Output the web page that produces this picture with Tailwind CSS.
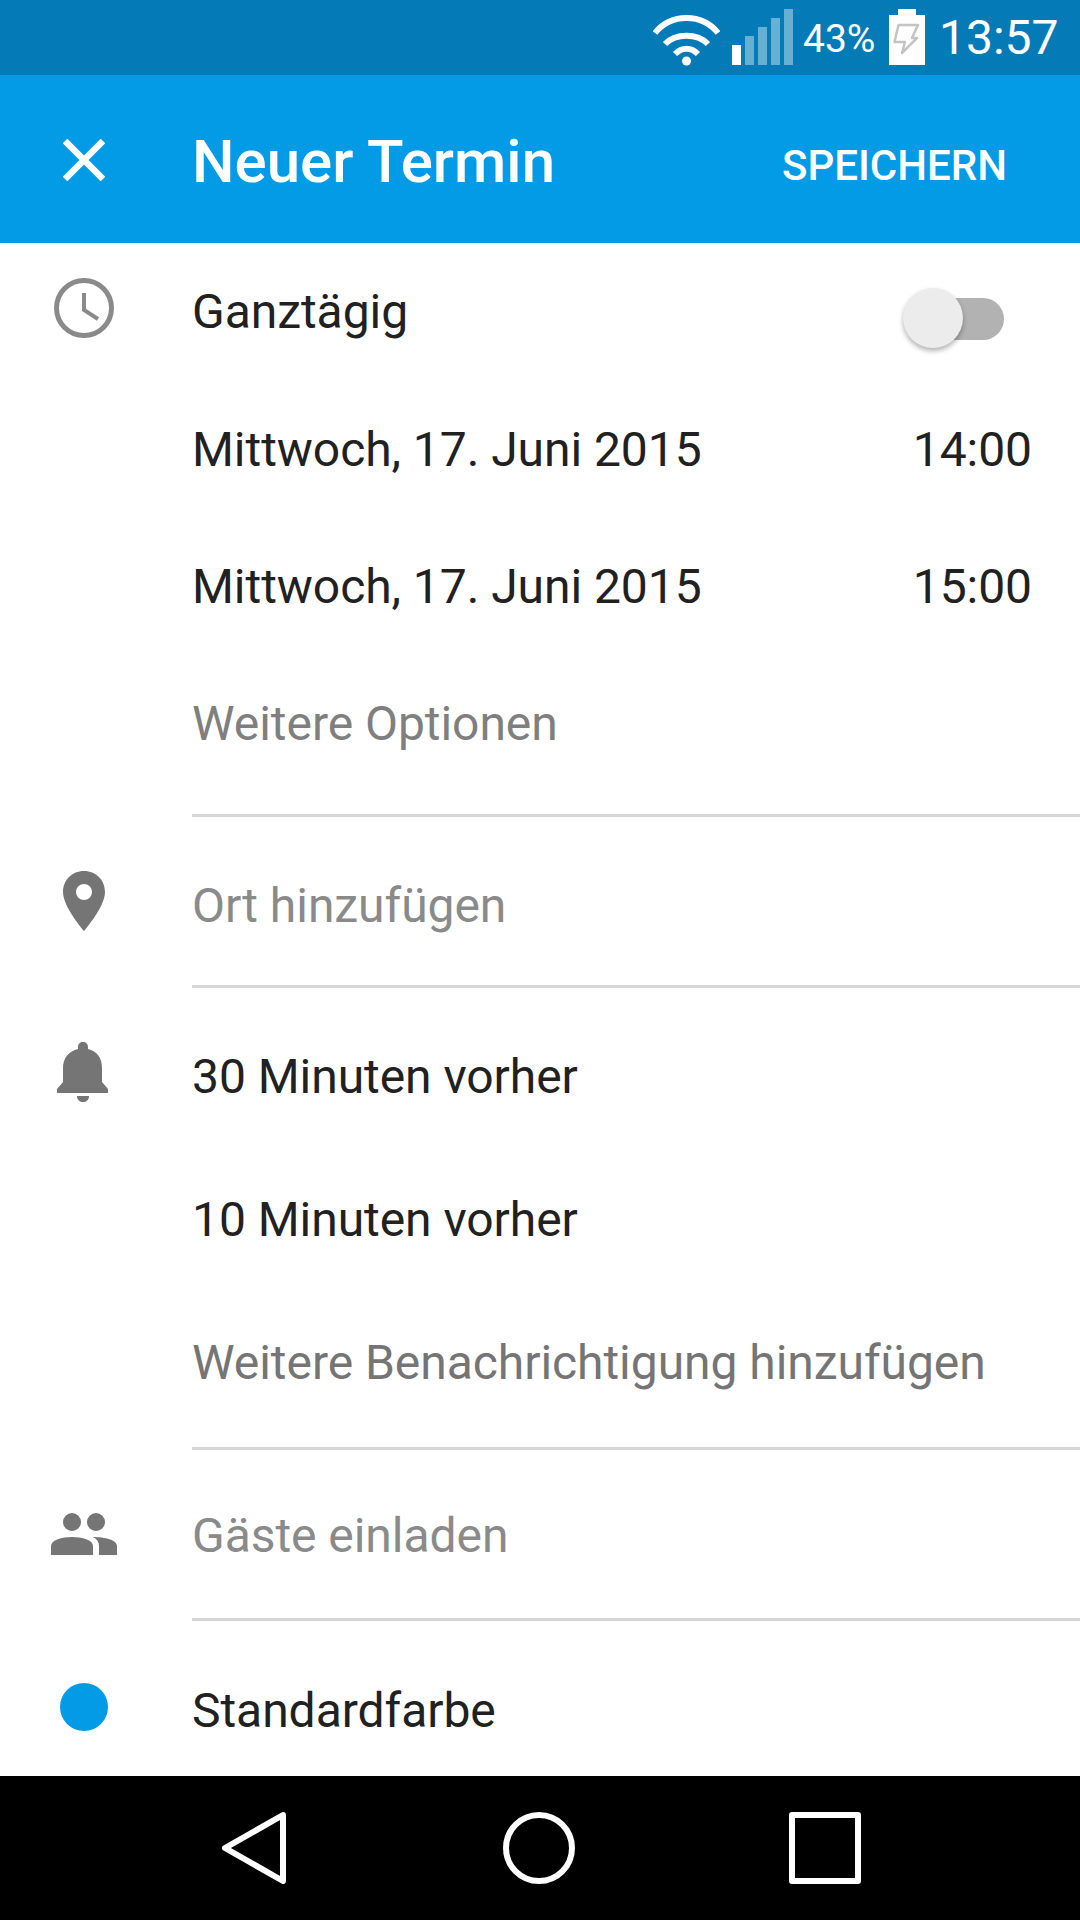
<!DOCTYPE html>
<html lang="de">
<head>
    <meta charset="UTF-8">
    <meta name="viewport" content="width=device-width, initial-scale=1.0">
    <title>Neuer Termin</title>
    <script src="https://cdn.jsdelivr.net/npm/@tailwindcss/browser@4"></script>
</head>
<body class="bg-white font-['Roboto',sans-serif]">
    <div class="flex flex-col w-[1080px] h-[1920px] overflow-hidden">
        <!-- Statusleiste -->
        <div class="h-[75px] shrink-0 bg-[#047ab7] flex items-start text-white">
            <svg class="shrink-0 ml-[653px] mt-[15px] w-[67px] h-[51px]" viewBox="0 0 67 51" fill="none" stroke="white" stroke-width="6">
                <path d="M2 18 C18 -2 49 -2 65 18"/>
                <path d="M12 29 C23 18 44 18 55 29"/>
                <path d="M22 39 C29 32 38 32 45 39"/>
                <circle cx="33.500" cy="46" r="4.500" fill="white" stroke="none"/>
            </svg>
            <div class="shrink-0 flex items-end gap-[4px] ml-[12px] mt-[9px] h-[56px]">
                <div class="w-[9px] h-[20px] bg-white"></div>
                <div class="w-[9px] h-[29px] bg-white/40"></div>
                <div class="w-[9px] h-[38px] bg-white/40"></div>
                <div class="w-[9px] h-[47px] bg-white/40"></div>
                <div class="w-[9px] h-[56px] bg-white/40"></div>
            </div>
            <span class="shrink-0 w-[86px] ml-[10px] mt-[20px] text-[39px] leading-none">43%</span>
            <svg class="shrink-0 mt-[9px] w-[36px] h-[56px]" viewBox="0 0 36 56">
                <path d="M9 0 H27 V6 H36 V56 H0 V6 H9 Z" fill="white"/>
                <path d="M9.500 16 H29 L23 29 H28 L13 44 L16 33 H5.500 Z" fill="none" stroke="#c4c4c4" stroke-width="2.500" stroke-linejoin="round"/>
            </svg>
            <span class="shrink-0 ml-[14px] mt-[14px] text-[48px] leading-none">13:57</span>
        </div>

        <!-- App-Leiste -->
        <div class="h-[168px] shrink-0 bg-[#039be5] flex items-center text-white">
            <svg class="ml-[63px] mt-[2px] w-[42px] h-[42px]" viewBox="0 0 42 42" stroke="white" stroke-width="6.500">
                <path d="M2 2 L40 40 M40 2 L2 40"/>
            </svg>
            <span class="ml-[87px] mt-[5px] text-[60px] font-medium leading-none">Neuer Termin</span>
            <span class="ml-auto mr-[73px] mt-[14px] text-[42px] font-medium leading-none">SPEICHERN</span>
        </div>

        <!-- Zeit -->
        <div class="h-[137px] mt-[1px] flex items-center relative text-[48px] tracking-[-0.05px] text-[#212121]">
            <svg class="absolute left-[54px] top-[34px] w-[60px] h-[60px]" viewBox="0 0 60 60" fill="none" stroke="#8a8a8a">
                <circle cx="30" cy="30" r="27.500" stroke-width="5"/>
                <path d="M30 15 V32 L44 41" stroke-width="4"/>
            </svg>
            <span class="ml-[192px] mb-[2px]">Ganztägig</span>
            <div class="absolute left-[903px] top-[44px] w-[101px] h-[60px]">
                <div class="absolute left-[13px] top-[10px] w-[88px] h-[42px] rounded-full bg-[#b2b2b2]"></div>
                <div class="absolute left-0 top-0 w-[60px] h-[60px] rounded-full bg-[#ececec] shadow-[0_3px_5px_rgba(0,0,0,0.3)]"></div>
            </div>
        </div>
        <div class="h-[137px] flex items-center justify-between pl-[192px] pr-[48px] text-[48px] tracking-[-0.05px] text-[#212121]">
            <span>Mittwoch, 17. Juni 2015</span><span>14:00</span>
        </div>
        <div class="h-[137px] flex items-center justify-between pl-[192px] pr-[48px] text-[48px] tracking-[-0.05px] text-[#212121]">
            <span>Mittwoch, 17. Juni 2015</span><span>15:00</span>
        </div>
        <div class="h-[137px] flex items-center pl-[192px] text-[48px] tracking-[-0.05px] text-[#7f7f7f]">Weitere Optionen</div>
        <div class="h-[3px] shrink-0 ml-[192px] bg-[#d6d6d6] mt-[22px]"></div>

        <!-- Ort -->
        <div class="h-[168px] flex items-center relative text-[48px] tracking-[-0.05px] text-[#8a8a8a]">
            <svg class="absolute left-[63px] top-[54px] w-[42px] h-[60px]" viewBox="0 0 42 60">
                <path fill-rule="evenodd" fill="#757575" d="M21 0 C9 0 0 9 0 21 C0 36 21 60 21 60 C21 60 42 36 42 21 C42 9 33 0 21 0 Z M21 13 A8 8 0 1 1 21 29 A8 8 0 1 1 21 13 Z"/>
            </svg>
            <span class="ml-[192px] mt-[9px]">Ort hinzufügen</span>
        </div>
        <div class="h-[3px] shrink-0 ml-[192px] bg-[#d6d6d6]"></div>

        <!-- Benachrichtigungen -->
        <div class="h-[160px] flex items-center relative text-[48px] tracking-[-0.05px] text-[#212121]">
            <svg class="absolute left-[57px] top-[54px] w-[51px] h-[60px]" viewBox="0 0 51 60">
                <path fill="#757575" d="M26 0 C29 0 31 2 31 5 V7 C40 9 45 16 45 26 V40 L51 47 V51 H0 V47 L6 40 V26 C6 16 12 9 21 7 V5 C21 2 23 0 26 0 Z"/>
                <path fill="#757575" d="M20 54 H32 C32 58 29 60 26 60 C23 60 20 58 20 54 Z"/>
            </svg>
            <span class="ml-[192px] mt-[18px]">30 Minuten vorher</span>
        </div>
        <div class="h-[142px] flex items-center pl-[192px] pt-[2px] text-[48px] tracking-[-0.05px] text-[#212121]">10 Minuten vorher</div>
        <div class="h-[144px] flex items-center pl-[192px] pt-[2px] text-[48px] tracking-[-0.05px] text-[#757575]">Weitere Benachrichtigung hinzufügen</div>
        <div class="h-[3px] shrink-0 ml-[192px] bg-[#d6d6d6] mt-[13px]"></div>

        <!-- Gäste -->
        <div class="h-[168px] flex items-center relative text-[48px] tracking-[-0.05px] text-[#8a8a8a]">
            <svg class="absolute left-[51px] top-[63px] w-[66px] h-[42px]" viewBox="0 0 66 42">
                <circle cx="21" cy="9" r="9" fill="#757575"/>
                <circle cx="45" cy="9" r="9" fill="#757575"/>
                <path fill="#757575" d="M0 42 V33 C0 27 11 24 21 24 C31 24 42 27 42 33 V42 Z"/>
                <path fill="#757575" d="M42 24 C54 24 66 27 66 33 V42 H48 V33 C48 29 46 26 42 24 Z"/>
            </svg>
            <span class="ml-[192px] mt-[3px]">Gäste einladen</span>
        </div>
        <div class="h-[3px] shrink-0 ml-[192px] bg-[#d6d6d6]"></div>

        <!-- Farbe -->
        <div class="flex-1 flex items-center relative text-[48px] tracking-[-0.05px] text-[#212121]">
            <div class="absolute left-[60px] top-[62px] w-[48px] h-[48px] rounded-full bg-[#039be5]"></div>
            <span class="ml-[192px] mt-[25px]">Standardfarbe</span>
        </div>

        <!-- Navigationsleiste -->
        <div class="h-[144px] shrink-0 bg-black relative">
            <svg class="absolute left-[222px] top-[36px] w-[64px] h-[72px]" viewBox="0 0 64 72" fill="none" stroke="white" stroke-width="6" stroke-linejoin="round">
                <path d="M61 3 L3 36 L61 69 Z"/>
            </svg>
            <svg class="absolute left-[503px] top-[36px] w-[72px] h-[72px]" viewBox="0 0 72 72" fill="none" stroke="white" stroke-width="6">
                <circle cx="36" cy="36" r="33"/>
            </svg>
            <svg class="absolute left-[789px] top-[36px] w-[72px] h-[72px]" viewBox="0 0 72 72" fill="none" stroke="white" stroke-width="6" stroke-linejoin="round">
                <rect x="3" y="3" width="66" height="66"/>
            </svg>
        </div>
    </div>
</body>
</html>
